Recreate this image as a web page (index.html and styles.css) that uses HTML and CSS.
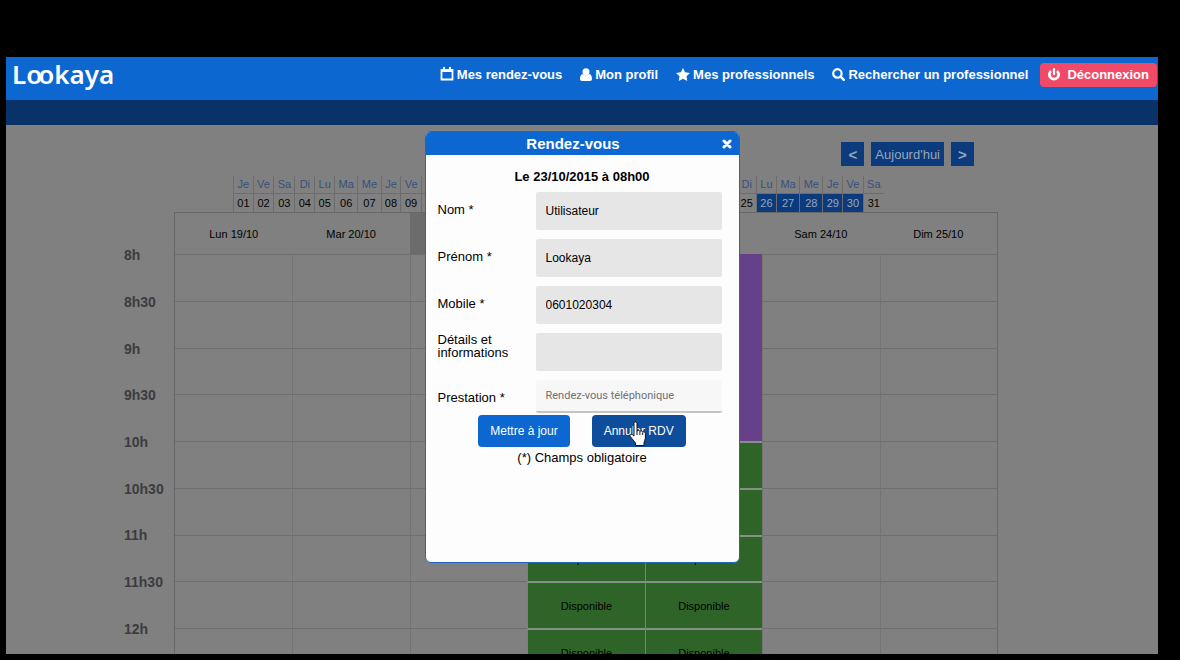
FILE: index.html
```html
<!DOCTYPE html>
<html lang="fr">
<head>
    <meta charset="UTF-8">
    <meta name="viewport" content="width=device-width, initial-scale=1.0">
    <title>Lookaya - Mes rendez-vous</title>
    <link rel="stylesheet" href="styles.css">
</head>
<body>
    <div class="app">
        <header class="topbar">
            <a href="#" class="logo">L<span class="logo-o">o</span>okaya</a>
            <nav class="menu">
                <a href="#">
                    <svg width="14" height="14" viewBox="0 0 14 14"><path d="M1.500 3h11v9.500h-11z" fill="none" stroke="#fff" stroke-width="1.800"/><path d="M1 2h12v3H1zM3 0h2v3H3zM9 0h2v3H9z" fill="#fff"/></svg>
                    Mes rendez-vous
                </a>
                <a href="#">
                    <svg width="12" height="13" viewBox="0 0 12 13"><circle cx="6" cy="3.800" r="3.500" fill="#fff"/><path d="M2.800 6c2 1.800 4.400 1.800 6.400 0 2 .4 2.800 2.600 2.800 4.800 0 1.400-.8 2.200-2 2.200H2c-1.200 0-2-.8-2-2.200C0 8.600.8 6.400 2.800 6z" fill="#fff"/></svg>
                    Mon profil
                </a>
                <a href="#">
                    <svg width="14" height="13" viewBox="0 0 14 13"><path d="M7 0l2.100 4.300 4.900.7-3.500 3.300.8 4.700L7 10.800 2.700 13l.8-4.700L0 5l4.900-.7z" fill="#fff"/></svg>
                    Mes professionnels
                </a>
                <a href="#">
                    <svg width="13" height="13" viewBox="0 0 13 13"><circle cx="5.400" cy="5.400" r="4.200" fill="none" stroke="#fff" stroke-width="2.200"/><path d="M8.600 8.600l3.200 3.200" stroke="#fff" stroke-width="2.400" stroke-linecap="round"/></svg>
                    Rechercher un professionnel
                </a>
                <a href="#" class="logout">
                    <svg width="12" height="13" viewBox="0 0 12 13"><path d="M3 3a4.600 4.600 0 1 0 6 0" fill="none" stroke="#fff" stroke-width="2.800"/><path d="M6 1.200v5" stroke="#fff" stroke-width="2.200" stroke-linecap="round"/></svg>
                    Déconnexion
                </a>
            </nav>
        </header>
        <div class="subbar"></div>

        <main class="content">
            <div class="week-nav">
                <button type="button" class="nav-arrow">&lt;</button>
                <button type="button" class="nav-today">Aujourd'hui</button>
                <button type="button" class="nav-arrow">&gt;</button>
            </div>

            <table class="month">
                <thead>
                    <tr>
                        <th>Je</th><th>Ve</th><th>Sa</th><th>Di</th><th>Lu</th><th>Ma</th><th>Me</th>
                        <th>Je</th><th>Ve</th><th>Sa</th><th>Di</th><th>Lu</th><th>Ma</th><th>Me</th>
                        <th>Je</th><th>Ve</th><th>Sa</th><th>Di</th><th>Lu</th><th>Ma</th><th>Me</th>
                        <th>Je</th><th>Ve</th><th>Sa</th><th>Di</th><th>Lu</th><th>Ma</th><th>Me</th>
                        <th>Je</th><th>Ve</th><th>Sa</th>
                    </tr>
                </thead>
                <tbody>
                    <tr>
                        <td>01</td><td>02</td><td>03</td><td>04</td><td>05</td><td>06</td><td>07</td>
                        <td>08</td><td>09</td><td>10</td><td>11</td><td>12</td><td>13</td><td>14</td>
                        <td>15</td><td>16</td><td>17</td><td>18</td><td>19</td><td>20</td><td>21</td>
                        <td>22</td><td>23</td><td>24</td><td>25</td><td class="open">26</td><td class="open">27</td><td class="open">28</td>
                        <td class="open">29</td><td class="open">30</td><td>31</td>
                    </tr>
                </tbody>
            </table>

            <div class="planning">
                <ul class="hours">
                    <li>8h</li>
                    <li>8h30</li>
                    <li>9h</li>
                    <li>9h30</li>
                    <li>10h</li>
                    <li>10h30</li>
                    <li>11h</li>
                    <li>11h30</li>
                    <li>12h</li>
                </ul>
                <table class="week">
                    <thead>
                        <tr>
                            <th>Lun 19/10</th>
                            <th>Mar 20/10</th>
                            <th class="today">Mer 21/10</th>
                            <th>Jeu 22/10</th>
                            <th>Ven 23/10</th>
                            <th>Sam 24/10</th>
                            <th>Dim 25/10</th>
                        </tr>
                    </thead>
                    <tbody>
                        <tr><td></td><td></td><td></td><td></td><td class="booked"></td><td></td><td></td></tr>
                        <tr><td></td><td></td><td></td><td></td><td class="booked"></td><td></td><td></td></tr>
                        <tr><td></td><td></td><td></td><td></td><td class="booked"></td><td></td><td></td></tr>
                        <tr><td></td><td></td><td></td><td></td><td class="booked"></td><td></td><td></td></tr>
                        <tr><td></td><td></td><td></td><td class="free">Disponible</td><td class="free">Disponible</td><td></td><td></td></tr>
                        <tr><td></td><td></td><td></td><td class="free">Disponible</td><td class="free">Disponible</td><td></td><td></td></tr>
                        <tr><td></td><td></td><td></td><td class="free">Disponible</td><td class="free">Disponible</td><td></td><td></td></tr>
                        <tr><td></td><td></td><td></td><td class="free">Disponible</td><td class="free">Disponible</td><td></td><td></td></tr>
                        <tr><td></td><td></td><td></td><td class="free">Disponible</td><td class="free">Disponible</td><td></td><td></td></tr>
                    </tbody>
                </table>
            </div>

            <div class="overlay">
                <div class="modal" role="dialog" aria-labelledby="modalTitle">
                    <div class="modal-header">
                        <h2 id="modalTitle">Rendez-vous</h2>
                        <button type="button" class="close" aria-label="Fermer">
                            <svg width="10" height="10" viewBox="0 0 10 10"><path d="M2 2l6 6M8 2l-6 6" stroke="#fff" stroke-width="3" stroke-linecap="round"/></svg>
                        </button>
                    </div>
                    <form class="modal-body">
                        <p class="date">Le 23/10/2015 à 08h00</p>
                        <div class="fields">
                            <label for="nom">Nom *</label>
                            <input type="text" id="nom" value="Utilisateur">
                            <label for="prenom">Prénom *</label>
                            <input type="text" id="prenom" value="Lookaya">
                            <label for="mobile">Mobile *</label>
                            <input type="text" id="mobile" value="0601020304">
                            <label for="details" class="two-lines">Détails et informations</label>
                            <input type="text" id="details">
                            <label for="prestation">Prestation *</label>
                            <select id="prestation">
                                <option>Rendez-vous téléphonique</option>
                            </select>
                        </div>
                        <div class="actions">
                            <button type="button" class="btn">Mettre à jour</button>
                            <button type="button" class="btn btn-hover">
                                Annuler RDV
                                <svg class="pointer" width="18" height="26" viewBox="0 0 18 26"><path d="M5 2.500C5 .5 8 .5 8 2.500V10c.6-1 2.600-.8 2.900.4.700-.9 2.500-.6 2.800.7.900-.7 2.700-.2 2.700 1.400V17c0 2-1.400 3.400-1.400 5v2.500H6.500V22C5 20 3.500 18.500 1.300 15.500c-1.100-1.600.7-3 2.100-1.900L5 15z" fill="#fff" stroke="#111" stroke-width="1"/><path d="M8 10v4M10.900 10.500V14M13.700 11.500V14" stroke="#111" stroke-width="1"/></svg>
                            </button>
                        </div>
                        <p class="note">(*) Champs obligatoire</p>
                    </form>
                </div>
            </div>
        </main>
    </div>
</body>
</html>
```
FILE: styles.css
```css
* {
    box-sizing: border-box;
}
body {
    margin: 0;
    height: 100vh;
    padding: 57px 22px 6px 6px;
    background-color: #000;
    color: #000;
    font-family: "Liberation Sans", Arial, sans-serif;
    font-size: 13px;
}
button, input, select {
    font-family: inherit;
    border: none;
}
.app {
    height: 100%;
    display: flex;
    flex-direction: column;
    overflow: hidden;
    background-color: #808080;
}

/* header */
.topbar {
    flex: none;
    height: 43px;
    padding: 0 1px 0 6px;
    display: flex;
    justify-content: space-between;
    align-items: flex-start;
    background-color: #0d67d1;
}
.logo {
    color: #fff;
    font-family: "Noto Sans", sans-serif;
    font-size: 26px;
    font-weight: 600;
    line-height: 35px;
    text-decoration: none;
}
.logo-o {
    margin-right: -4px;
}
.menu {
    display: flex;
    align-items: center;
    gap: 18px;
    padding-top: 6px;
}
.menu a {
    display: flex;
    align-items: center;
    gap: 3px;
    height: 24px;
    padding-bottom: 2px;
    color: #fff;
    font-weight: bold;
    text-decoration: none;
}
.menu .logout {
    gap: 7px;
    margin-left: -6px;
    padding: 0 8px 2px;
    border-radius: 4px;
    background-color: #f04a68;
}
.subbar {
    flex: none;
    height: 25px;
    background-color: #093368;
}

/* calendar */
.content {
    flex: 1;
    min-height: 0;
    position: relative;
    padding: 17px 160px 0 118px;
    overflow: hidden;
}
.week-nav {
    display: flex;
    justify-content: flex-end;
    gap: 7px;
    height: 24px;
    padding-right: 24px;
}
.week-nav button {
    background-color: #0b3b7c;
    color: #98a6bc;
    font-size: 13px;
}
.week-nav .nav-arrow {
    width: 23px;
    padding: 0;
    font-size: 15px;
    font-weight: bold;
}
.week-nav .nav-today {
    padding: 0 4px;
}
.month {
    width: 651px;
    margin: 10px 0 0 109px;
    border-collapse: collapse;
    font-size: 11px;
    text-align: center;
}
.month th {
    height: 17px;
    padding: 0 2px;
    border-left: 1px solid #6c6c6c;
    color: #36517f;
    font-weight: normal;
}
.month td {
    height: 19px;
    padding: 0 2px;
    border-left: 1px solid #6c6c6c;
    border-top: 1px solid #6c6c6c;
}
.month .open {
    background-color: #0b3b7c;
    color: #98a6bc;
}
.planning {
    display: flex;
}
.hours {
    width: 50px;
    height: 420px;
    margin: 20px 0 0;
    padding: 0;
    display: flex;
    flex: none;
    flex-direction: column;
    list-style: none;
    color: #3c3c40;
    font-size: 14px;
    font-weight: bold;
}
.hours li {
    flex: 1;
    display: flex;
    align-items: center;
}
.week {
    width: 100%;
    height: 464px;
    table-layout: fixed;
    border-collapse: separate;
    border-spacing: 0;
    border: 1px solid #676767;
    font-size: 11px;
    text-align: center;
}
.week th {
    height: 41px;
    padding: 0;
    font-weight: normal;
}
.week .today {
    background-color: #6c6c6c;
}
.week tbody tr {
    height: 46px;
}
.week td {
    padding: 0;
    border-top: 1px solid #6e6e6e;
    border-left: 1px solid #747474;
}
.week td:first-child {
    border-left: none;
}
.week .booked {
    border-top: none;
    background-color: #66418a;
}
.week .free {
    border-top: 2px solid #879087;
    border-left: 1px solid #6f8a6b;
    background-color: #2f6428;
}

/* popup */
.overlay {
    position: absolute;
    inset: 0;
    display: flex;
    justify-content: center;
    align-items: flex-start;
    padding-top: 6px;
}
.modal {
    width: 315px;
    min-height: 432px;
    border: 1px solid #1f66c4;
    border-radius: 6px;
    background-color: #fefdfe;
    overflow: hidden;
}
.modal-header {
    display: flex;
    align-items: center;
    height: 23px;
    background-color: #0d67d1;
}
.modal-header h2 {
    flex: 1;
    margin: 0;
    color: #fff;
    font-size: 15px;
    line-height: 21px;
    text-align: center;
}
.close {
    display: flex;
    padding: 0 7px 0 1px;
    background: none;
}
.modal-body {
    padding: 14px 12px 0;
}
.date {
    margin: 0 0 8px;
    font-weight: bold;
    line-height: 15px;
    text-align: center;
}
.fields {
    display: grid;
    grid-template-columns: 98px 1fr;
    row-gap: 9px;
    padding-right: 5px;
}
.fields label {
    padding-top: 11px;
    line-height: 13px;
}
.fields .two-lines {
    padding: 0 20px 0 0;
}
.fields input {
    min-width: 0;
    height: 38px;
    padding: 0 10px;
    border-radius: 2px;
    background-color: #e6e6e6;
    font-size: 12px;
}
.fields select {
    appearance: none;
    height: 33px;
    padding: 0 10px;
    border-bottom: 2px solid #c4c4c4;
    border-radius: 2px;
    background-color: #f7f7f7;
    color: #707070;
    font-family: Roboto, sans-serif;
    font-size: 11px;
}
.actions {
    display: flex;
    justify-content: center;
    gap: 22px;
    margin-top: 2px;
}
.btn {
    height: 32px;
    padding: 0 12px;
    border-radius: 4px;
    background-color: #0d67d1;
    color: #fff;
    font-size: 12px;
}
.btn-hover {
    position: relative;
    background-color: #0e4c9c;
}
.pointer {
    position: absolute;
    left: 37px;
    top: 6px;
}
.note {
    margin: 3px 0 0;
    line-height: 15px;
    text-align: center;
}
```
